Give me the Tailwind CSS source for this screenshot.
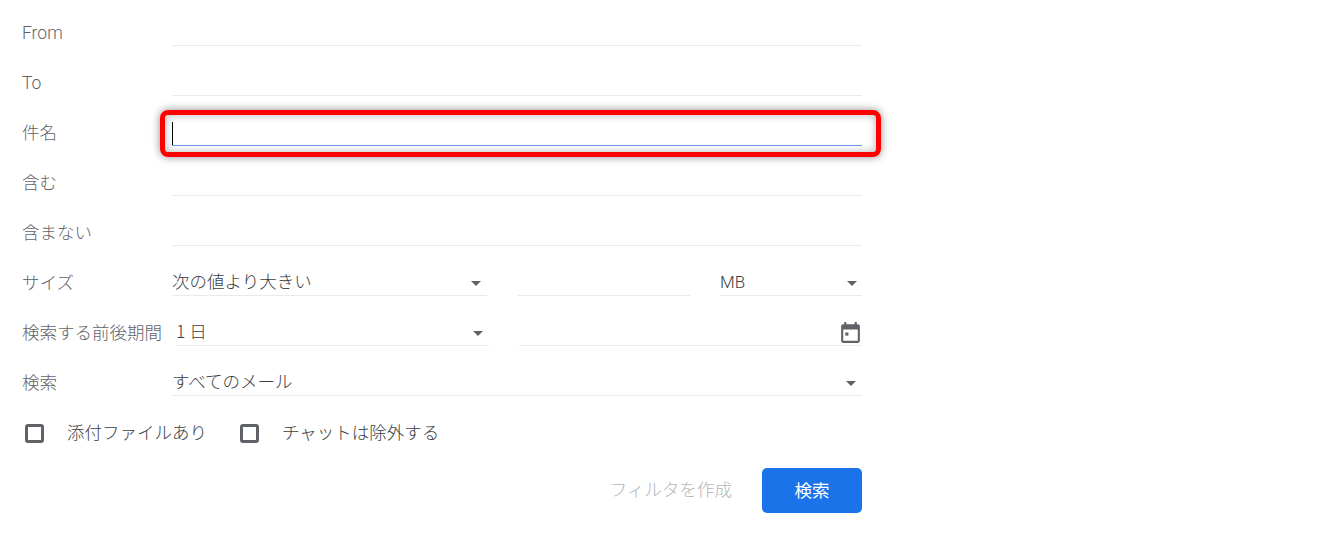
<!DOCTYPE html>
<html lang="ja">
<head>
    <meta charset="UTF-8">
    <title>検索</title>
    <script src="https://cdn.jsdelivr.net/npm/@tailwindcss/browser@4"></script>
</head>
<body class="bg-white h-[534px] overflow-hidden font-['Noto_Sans_CJK_JP','Noto_Sans',sans-serif] text-[17.5px] font-light text-[#3c4043]">
    <div class="w-[862px] pl-[22px] flex flex-col">
        <!-- From -->
        <div class="flex items-end h-[46px]">
            <div class="w-[150px] text-[#5f6368] font-['Roboto',sans-serif] text-[17.5px] font-light">From</div>
            <div class="flex-1 h-full border-b border-[#e8eaed]"></div>
        </div>
        <!-- To -->
        <div class="flex items-end h-[50px]">
            <div class="w-[150px] text-[#5f6368] font-['Roboto',sans-serif] text-[17.5px] font-light">To</div>
            <div class="flex-1 h-full border-b border-[#e8eaed]"></div>
        </div>
        <!-- Subject, with the red highlight over it -->
        <div class="flex items-end h-[50px] relative">
            <div class="w-[150px] mb-[1px] text-[#5f6368]">件名</div>
            <div class="flex-1 h-full border-b border-[#6c9cf0] flex items-end">
                <div class="w-[1px] h-[23px] bg-black"></div>
            </div>
            <div class="absolute left-[138px] top-[14px] w-[721px] h-[47px] border-[5px] border-[#ff0000] rounded-[8px] shadow-[0_0_8px_rgba(0,0,0,0.45),inset_0_0_8px_rgba(0,0,0,0.3)]"></div>
        </div>
        <div class="flex items-end h-[50px]">
            <div class="w-[150px] mb-[1px] text-[#5f6368]">含む</div>
            <div class="flex-1 h-full border-b border-[#e8eaed]"></div>
        </div>
        <div class="flex items-end h-[50px]">
            <div class="w-[150px] mb-[1px] text-[#5f6368]">含まない</div>
            <div class="flex-1 h-full border-b border-[#e8eaed]"></div>
        </div>
        <!-- Size -->
        <div class="flex items-end h-[50px]">
            <div class="w-[150px] mb-[1px] text-[#5f6368]">サイズ</div>
            <div class="flex-1 h-full flex">
                <div class="w-[315px] border-b border-[#e8eaed] flex items-end justify-between pr-[6px]">
                    <span class="mb-[1px]">次の値より大きい</span>
                    <span class="w-0 h-0 border-x-[5px] border-x-transparent border-t-[5px] border-t-[#5f6368] mb-[9px]"></span>
                </div>
                <div class="w-[172px] ml-[31px] border-b border-[#e8eaed]"></div>
                <div class="w-[142px] ml-[30px] border-b border-[#e8eaed] flex items-end justify-between pr-[5px]">
                    <span class="font-['Roboto',sans-serif] text-[17px]">MB</span>
                    <span class="w-0 h-0 border-x-[5px] border-x-transparent border-t-[5px] border-t-[#5f6368] mb-[9px]"></span>
                </div>
            </div>
        </div>
        <!-- Date range -->
        <div class="flex items-end h-[50px]">
            <div class="w-[150px] mb-[1px] text-[#5f6368] whitespace-nowrap">検索する前後期間</div>
            <div class="flex-1 h-full flex">
                <div class="w-[313px] ml-[4px] border-b border-[#e8eaed] flex items-end justify-between pr-[6px]">
                    <span class="mb-[1px]">1 日</span>
                    <span class="w-0 h-0 border-x-[5px] border-x-transparent border-t-[5px] border-t-[#5f6368] mb-[9px]"></span>
                </div>
                <div class="flex-1 ml-[30px] border-b border-[#e8eaed] flex items-end justify-end">
                    <svg class="w-[25px] h-[25px] mr-[-1px]" viewBox="0 0 24 24" fill="#5f6368"><path d="M19 4h-1V2h-2v2H8V2H6v2H5c-1.1 0-2 .9-2 2v14c0 1.1.9 2 2 2h14c1.1 0 2-.9 2-2V6c0-1.1-.9-2-2-2zm0 16H5V9h14v11z"/><rect x="7" y="12" width="3" height="3"/></svg>
                </div>
            </div>
        </div>
        <!-- Search in -->
        <div class="flex items-end h-[50px]">
            <div class="w-[150px] mb-[1px] text-[#5f6368]">検索</div>
            <div class="flex-1 h-full border-b border-[#e8eaed] flex items-end justify-between pr-[6px]">
                <span class="mb-[1px]">すべてのメール</span>
                <span class="w-0 h-0 border-x-[5px] border-x-transparent border-t-[5px] border-t-[#5f6368] mb-[9px]"></span>
            </div>
        </div>
        <!-- Checkboxes -->
        <div class="flex items-end h-[50px]">
            <span class="w-[19px] h-[19px] ml-[3px] mb-[3px] border-[3px] border-[#5f6368] rounded-[3px]"></span>
            <span class="ml-[23px] mb-[1px]">添付ファイルあり</span>
            <span class="w-[19px] h-[19px] ml-[33px] mb-[3px] border-[3px] border-[#5f6368] rounded-[3px]"></span>
            <span class="ml-[23px] mb-[1px]">チャットは除外する</span>
        </div>
        <!-- Actions -->
        <div class="flex items-center justify-end mt-[22px]">
            <span class="text-[#b4b7bb] mr-[30px] mb-[2px]">フィルタを作成</span>
            <button class="w-[100px] h-[45px] bg-[#1a73e8] text-white rounded-[5px] font-normal">検索</button>
        </div>
    </div>
</body>
</html>
